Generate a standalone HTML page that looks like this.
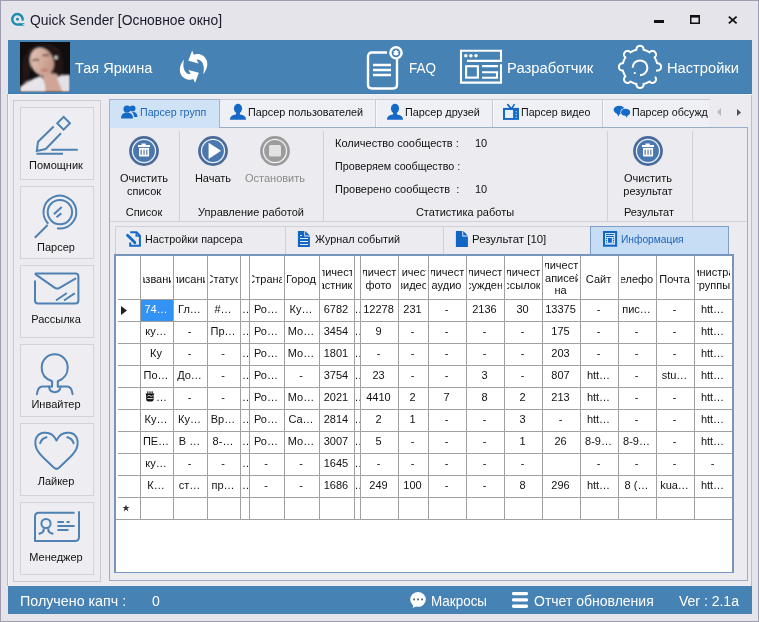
<!DOCTYPE html>
<html><head><meta charset="utf-8"><style>
html,body{margin:0;padding:0;}
body{width:759px;height:622px;overflow:hidden;position:relative;font-family:"Liberation Sans",sans-serif;}
</style></head><body><div style="position:absolute;left:0;top:0;width:759px;height:622px;will-change:transform;">
<div style="position:absolute;left:0px;top:0px;width:759px;height:622px;background:#e4e4ea;"></div>
<div style="position:absolute;left:0px;top:0px;width:759px;height:1px;background:#9e9cb0;"></div>
<div style="position:absolute;left:0px;top:0px;width:1px;height:622px;background:#9e9cb0;"></div>
<div style="position:absolute;left:758px;top:0px;width:1px;height:622px;background:#9e9cb0;"></div>
<div style="position:absolute;left:0px;top:621px;width:759px;height:1px;background:#9e9cb0;"></div>
<div style="position:absolute;left:8px;top:40px;width:744px;height:574px;background:#ebebf0;"></div>
<div style="position:absolute;left:751px;top:94px;width:1px;height:492px;background:#bfbcc8;"></div>
<div style="position:absolute;left:7px;top:94px;width:1px;height:492px;background:#bbbbc5;"></div>
<div style="position:absolute;left:8px;top:94px;width:1px;height:492px;background:#f3f3f7;"></div>
<svg style="position:absolute;left:8px;top:10px;" width="20" height="20" viewBox="0 0 20 20"><path d="M14.52 10.66 A5.25 5.25 0 1 0 11.67 14.06" fill="none" stroke="#1a8cae" stroke-width="2.4"/>
<circle cx="9.45" cy="9.3" r="1.45" fill="#1a8cae"/>
<path d="M11.2 13.3 L14.8 12.9 L14.8 15.7 L11.2 15.7 Z" fill="#1a8cae"/>
<rect x="15.2" y="13" width="1.1" height="0.9" fill="#3f6f84"/><rect x="15.2" y="14.9" width="1.1" height="0.9" fill="#3f6f84"/></svg>
<div style="position:absolute;left:30px;top:11.88px;font-size:14.5px;line-height:16.67px;height:16.67px;white-space:pre;color:#1b1b2a;transform:scaleX(0.956);transform-origin:0 0;">Quick Sender [Основное окно]</div>
<div style="position:absolute;left:654px;top:20px;width:10px;height:3px;background:#111;"></div>
<svg style="position:absolute;left:689px;top:14px;" width="12" height="11" viewBox="0 0 12 11"><rect x="1.75" y="1.75" width="8.5" height="7.5" fill="none" stroke="#111" stroke-width="1.5"/><rect x="1" y="1" width="10" height="2.6" fill="#111"/></svg>
<svg style="position:absolute;left:727px;top:15px;" width="12" height="10" viewBox="0 0 12 10"><path d="M1.8 1.6 L9.6 8.4 M9.6 1.6 L1.8 8.4" stroke="#111" stroke-width="1.8"/></svg>
<div style="position:absolute;left:8px;top:40px;width:744px;height:54px;background:#4682b4;"></div>
<div style="position:absolute;left:8px;top:93px;width:744px;height:1px;background:#3f7aae;"></div>
<div style="position:absolute;left:8px;top:94px;width:744px;height:1px;background:#eef5fb;"></div>
<svg style="position:absolute;left:20px;top:42px;" width="50" height="50" viewBox="0 0 50 50"><defs>
<filter id="bl" x="-20%" y="-20%" width="140%" height="140%"><feGaussianBlur stdDeviation="0.8"/></filter>
<linearGradient id="sk" x1="0" y1="0" x2="1" y2="1"><stop offset="0" stop-color="#e9cbbd"/><stop offset="1" stop-color="#b98a7a"/></linearGradient>
</defs>
<rect width="50" height="50" fill="#100d0e"/>
<g filter="url(#bl)">
<path d="M8 8 C14 1 30 0 38 6 C44 12 44 26 42 36 L34 36 C34 26 33 16 30 11 C24 7 15 9 12 18 C10 25 10 32 8 40 L2 40 L3 18 Z" fill="#211917"/>
<ellipse cx="22" cy="20" rx="11.5" ry="14.5" fill="url(#sk)" transform="rotate(-22 22 20)"/>
<path d="M24 30 C30 32 36 30 38 34 L42 50 L20 50 Z" fill="#cfa595"/>
<path d="M0 50 L0 45 C6 40 14 36 21 34 C24 38 26 44 25 50 Z" fill="#e8e5ea"/>
<path d="M50 50 L50 33 C46 32 40 33 37 36 C39 41 41 46 42 50 Z" fill="#e4e1e6"/>
<path d="M12 19 Q15.5 16.5 19 18 M22.5 14 Q26 12 29 13.5" stroke="#3a2420" stroke-width="1.4" fill="none"/>
<path d="M20 28 Q24 26.5 28 27.5 Q24.5 31 20 28 Z" fill="#bf6e6a"/>
<circle cx="36" cy="15.5" r="1.5" fill="#f4f4f4"/>
</g></svg>
<div style="position:absolute;left:75px;top:58.97px;font-size:15.5px;line-height:17.82px;height:17.82px;white-space:pre;color:#fff;transform:scaleX(0.937);transform-origin:0 0;">Тая Яркина</div>
<svg style="position:absolute;left:174px;top:48px;" width="40" height="40" viewBox="0 0 40 40"><g fill="#fff" transform="translate(19.6 18.8) scale(1.1) translate(-19.6 -18.8)">
<path id="ra" d="M28.3 25.5 C33 20 34 12 27.5 8.2 C24.5 6.6 21.5 7 19.8 7.8 L18.3 4 L14.8 13.4 L24.2 15.8 L22.3 12.2 C26.5 11.6 30.5 16.5 28.3 25.5 Z"/>
<use href="#ra" transform="rotate(180 19.6 18.8)"/>
</g></svg>
<svg style="position:absolute;left:365px;top:44px;" width="40" height="48" viewBox="0 0 40 48"><g fill="none" stroke="#fff" stroke-width="2.4">
<path d="M22 8.5 H7 Q3 8.5 3 12.5 V40.5 Q3 44.5 7 44.5 H28 Q32 44.5 32 40.5 V15"/>
<circle cx="31" cy="8.8" r="5.6"/>
<path d="M8 21 H26 M8 26 H26 M8 31 H26"/>
</g><path d="M31 6 L31 11.6 M28.6 7.4 L33.4 10.2 M33.4 7.4 L28.6 10.2" stroke="#fff" stroke-width="1.6"/></svg>
<div style="position:absolute;left:409px;top:58.97px;font-size:15.5px;line-height:17.82px;height:17.82px;white-space:pre;color:#fff;transform:scaleX(0.87);transform-origin:0 0;">FAQ</div>
<svg style="position:absolute;left:459px;top:49px;" width="45" height="37" viewBox="0 0 45 37"><g fill="none" stroke="#fff" stroke-width="2.1">
<path d="M42 15.2 V33.6 H2 V1.8 H42 V11.9 H7.9"/>
<rect x="7.1" y="17.2" width="11.8" height="11.4"/>
<path d="M23.1 17.1 H39 M23.1 23.3 H38 V28.7 H23.1"/>
</g><g fill="#fff"><circle cx="6.8" cy="6.8" r="1.8"/><circle cx="11.9" cy="6.8" r="1.8"/><circle cx="17" cy="6.8" r="1.8"/></g></svg>
<div style="position:absolute;left:507px;top:58.97px;font-size:15.5px;line-height:17.82px;height:17.82px;white-space:pre;color:#fff;transform:scaleX(0.955);transform-origin:0 0;">Разработчик</div>
<svg style="position:absolute;left:617px;top:44px;" width="46" height="46" viewBox="0 0 46 46"><path d="M38.49 33.44 L38.69 33.78 L38.82 34.08 L38.91 34.36 L38.97 34.61 L39.01 34.86 L39.03 35.09 L39.03 35.31 L39.02 35.53 L38.99 35.74 L38.96 35.94 L38.91 36.13 L38.85 36.32 L38.79 36.50 L38.71 36.68 L38.63 36.85 L38.54 37.02 L38.44 37.17 L38.34 37.33 L38.23 37.48 L38.11 37.62 L37.98 37.75 L37.85 37.88 L37.72 38.01 L37.58 38.13 L37.43 38.24 L37.27 38.34 L37.12 38.44 L36.95 38.53 L36.78 38.61 L36.60 38.69 L36.42 38.75 L36.23 38.81 L36.04 38.86 L35.84 38.89 L35.63 38.92 L35.41 38.93 L35.19 38.93 L34.96 38.91 L34.71 38.87 L34.46 38.81 L34.18 38.72 L33.88 38.59 L33.54 38.39 L33.11 38.04 L32.54 37.45 L32.41 37.53 L32.28 37.62 L32.16 37.70 L32.03 37.78 L31.90 37.85 L31.77 37.93 L31.63 38.01 L31.50 38.08 L31.37 38.16 L31.24 38.23 L31.10 38.30 L30.97 38.37 L30.83 38.44 L30.70 38.51 L30.56 38.57 L30.42 38.64 L30.28 38.70 L30.15 38.76 L30.01 38.83 L29.87 38.89 L29.73 38.95 L29.59 39.00 L29.45 39.06 L29.31 39.12 L29.16 39.17 L29.02 39.22 L28.88 39.28 L28.74 39.33 L28.59 39.38 L28.45 39.42 L28.30 39.47 L28.16 39.52 L28.01 39.56 L27.87 39.60 L27.72 39.65 L27.58 39.69 L27.43 39.73 L27.28 39.76 L27.14 39.80 L26.99 39.84 L26.84 39.87 L26.69 39.90 L26.54 39.94 L26.55 40.75 L26.49 41.31 L26.40 41.69 L26.28 41.99 L26.15 42.25 L26.01 42.48 L25.87 42.68 L25.72 42.85 L25.56 43.01 L25.40 43.16 L25.23 43.29 L25.06 43.40 L24.89 43.51 L24.72 43.60 L24.54 43.68 L24.37 43.75 L24.19 43.82 L24.01 43.87 L23.83 43.91 L23.64 43.95 L23.46 43.97 L23.28 43.99 L23.09 44.00 L22.91 44.00 L22.72 43.99 L22.54 43.97 L22.36 43.95 L22.17 43.91 L21.99 43.87 L21.81 43.82 L21.63 43.75 L21.46 43.68 L21.28 43.60 L21.11 43.51 L20.94 43.40 L20.77 43.29 L20.60 43.16 L20.44 43.01 L20.28 42.85 L20.13 42.68 L19.99 42.48 L19.85 42.25 L19.72 41.99 L19.60 41.69 L19.51 41.31 L19.45 40.75 L19.46 39.94 L19.31 39.90 L19.16 39.87 L19.01 39.84 L18.86 39.80 L18.72 39.76 L18.57 39.73 L18.42 39.69 L18.28 39.65 L18.13 39.60 L17.99 39.56 L17.84 39.52 L17.70 39.47 L17.55 39.42 L17.41 39.38 L17.26 39.33 L17.12 39.28 L16.98 39.22 L16.84 39.17 L16.69 39.12 L16.55 39.06 L16.41 39.00 L16.27 38.95 L16.13 38.89 L15.99 38.83 L15.85 38.76 L15.72 38.70 L15.58 38.64 L15.44 38.57 L15.30 38.51 L15.17 38.44 L15.03 38.37 L14.90 38.30 L14.76 38.23 L14.63 38.16 L14.50 38.08 L14.37 38.01 L14.23 37.93 L14.10 37.85 L13.97 37.78 L13.84 37.70 L13.72 37.62 L13.59 37.53 L13.46 37.45 L12.89 38.04 L12.46 38.39 L12.12 38.59 L11.82 38.72 L11.54 38.81 L11.29 38.87 L11.04 38.91 L10.81 38.93 L10.59 38.93 L10.37 38.92 L10.16 38.89 L9.96 38.86 L9.77 38.81 L9.58 38.75 L9.40 38.69 L9.22 38.61 L9.05 38.53 L8.88 38.44 L8.73 38.34 L8.57 38.24 L8.42 38.13 L8.28 38.01 L8.15 37.88 L8.02 37.75 L7.89 37.62 L7.77 37.48 L7.66 37.33 L7.56 37.17 L7.46 37.02 L7.37 36.85 L7.29 36.68 L7.21 36.50 L7.15 36.32 L7.09 36.13 L7.04 35.94 L7.01 35.74 L6.98 35.53 L6.97 35.31 L6.97 35.09 L6.99 34.86 L7.03 34.61 L7.09 34.36 L7.18 34.08 L7.31 33.78 L7.51 33.44 L7.86 33.01 L8.45 32.44 L8.37 32.31 L8.28 32.18 L8.20 32.06 L8.12 31.93 L8.05 31.80 L7.97 31.67 L7.89 31.53 L7.82 31.40 L7.74 31.27 L7.67 31.14 L7.60 31.00 L7.53 30.87 L7.46 30.73 L7.39 30.60 L7.33 30.46 L7.26 30.32 L7.20 30.18 L7.14 30.05 L7.07 29.91 L7.01 29.77 L6.95 29.63 L6.90 29.49 L6.84 29.35 L6.78 29.21 L6.73 29.06 L6.68 28.92 L6.62 28.78 L6.57 28.64 L6.52 28.49 L6.48 28.35 L6.43 28.20 L6.38 28.06 L6.34 27.91 L6.30 27.77 L6.25 27.62 L6.21 27.48 L6.17 27.33 L6.14 27.18 L6.10 27.04 L6.06 26.89 L6.03 26.74 L6.00 26.59 L5.96 26.44 L5.15 26.45 L4.59 26.39 L4.21 26.30 L3.91 26.18 L3.65 26.05 L3.42 25.91 L3.22 25.77 L3.05 25.62 L2.89 25.46 L2.74 25.30 L2.61 25.13 L2.50 24.96 L2.39 24.79 L2.30 24.62 L2.22 24.44 L2.15 24.27 L2.08 24.09 L2.03 23.91 L1.99 23.73 L1.95 23.54 L1.93 23.36 L1.91 23.18 L1.90 22.99 L1.90 22.81 L1.91 22.62 L1.93 22.44 L1.95 22.26 L1.99 22.07 L2.03 21.89 L2.08 21.71 L2.15 21.53 L2.22 21.36 L2.30 21.18 L2.39 21.01 L2.50 20.84 L2.61 20.67 L2.74 20.50 L2.89 20.34 L3.05 20.18 L3.22 20.03 L3.42 19.89 L3.65 19.75 L3.91 19.62 L4.21 19.50 L4.59 19.41 L5.15 19.35 L5.96 19.36 L6.00 19.21 L6.03 19.06 L6.06 18.91 L6.10 18.76 L6.14 18.62 L6.17 18.47 L6.21 18.32 L6.25 18.18 L6.30 18.03 L6.34 17.89 L6.38 17.74 L6.43 17.60 L6.48 17.45 L6.52 17.31 L6.57 17.16 L6.62 17.02 L6.68 16.88 L6.73 16.74 L6.78 16.59 L6.84 16.45 L6.90 16.31 L6.95 16.17 L7.01 16.03 L7.07 15.89 L7.14 15.75 L7.20 15.62 L7.26 15.48 L7.33 15.34 L7.39 15.20 L7.46 15.07 L7.53 14.93 L7.60 14.80 L7.67 14.66 L7.74 14.53 L7.82 14.40 L7.89 14.27 L7.97 14.13 L8.05 14.00 L8.12 13.87 L8.20 13.74 L8.28 13.62 L8.37 13.49 L8.45 13.36 L7.86 12.79 L7.51 12.36 L7.31 12.02 L7.18 11.72 L7.09 11.44 L7.03 11.19 L6.99 10.94 L6.97 10.71 L6.97 10.49 L6.98 10.27 L7.01 10.06 L7.04 9.86 L7.09 9.67 L7.15 9.48 L7.21 9.30 L7.29 9.12 L7.37 8.95 L7.46 8.78 L7.56 8.63 L7.66 8.47 L7.77 8.32 L7.89 8.18 L8.02 8.05 L8.15 7.92 L8.28 7.79 L8.42 7.67 L8.57 7.56 L8.73 7.46 L8.88 7.36 L9.05 7.27 L9.22 7.19 L9.40 7.11 L9.58 7.05 L9.77 6.99 L9.96 6.94 L10.16 6.91 L10.37 6.88 L10.59 6.87 L10.81 6.87 L11.04 6.89 L11.29 6.93 L11.54 6.99 L11.82 7.08 L12.12 7.21 L12.46 7.41 L12.89 7.76 L13.46 8.35 L13.59 8.27 L13.72 8.18 L13.84 8.10 L13.97 8.02 L14.10 7.95 L14.23 7.87 L14.37 7.79 L14.50 7.72 L14.63 7.64 L14.76 7.57 L14.90 7.50 L15.03 7.43 L15.17 7.36 L15.30 7.29 L15.44 7.23 L15.58 7.16 L15.72 7.10 L15.85 7.04 L15.99 6.97 L16.13 6.91 L16.27 6.85 L16.41 6.80 L16.55 6.74 L16.69 6.68 L16.84 6.63 L16.98 6.58 L17.12 6.52 L17.26 6.47 L17.41 6.42 L17.55 6.38 L17.70 6.33 L17.84 6.28 L17.99 6.24 L18.13 6.20 L18.28 6.15 L18.42 6.11 L18.57 6.07 L18.72 6.04 L18.86 6.00 L19.01 5.96 L19.16 5.93 L19.31 5.90 L19.46 5.86 L19.45 5.05 L19.51 4.49 L19.60 4.11 L19.72 3.81 L19.85 3.55 L19.99 3.32 L20.13 3.12 L20.28 2.95 L20.44 2.79 L20.60 2.64 L20.77 2.51 L20.94 2.40 L21.11 2.29 L21.28 2.20 L21.46 2.12 L21.63 2.05 L21.81 1.98 L21.99 1.93 L22.17 1.89 L22.36 1.85 L22.54 1.83 L22.72 1.81 L22.91 1.80 L23.09 1.80 L23.28 1.81 L23.46 1.83 L23.64 1.85 L23.83 1.89 L24.01 1.93 L24.19 1.98 L24.37 2.05 L24.54 2.12 L24.72 2.20 L24.89 2.29 L25.06 2.40 L25.23 2.51 L25.40 2.64 L25.56 2.79 L25.72 2.95 L25.87 3.12 L26.01 3.32 L26.15 3.55 L26.28 3.81 L26.40 4.11 L26.49 4.49 L26.55 5.05 L26.54 5.86 L26.69 5.90 L26.84 5.93 L26.99 5.96 L27.14 6.00 L27.28 6.04 L27.43 6.07 L27.58 6.11 L27.72 6.15 L27.87 6.20 L28.01 6.24 L28.16 6.28 L28.30 6.33 L28.45 6.38 L28.59 6.42 L28.74 6.47 L28.88 6.52 L29.02 6.58 L29.16 6.63 L29.31 6.68 L29.45 6.74 L29.59 6.80 L29.73 6.85 L29.87 6.91 L30.01 6.97 L30.15 7.04 L30.28 7.10 L30.42 7.16 L30.56 7.23 L30.70 7.29 L30.83 7.36 L30.97 7.43 L31.10 7.50 L31.24 7.57 L31.37 7.64 L31.50 7.72 L31.63 7.79 L31.77 7.87 L31.90 7.95 L32.03 8.02 L32.16 8.10 L32.28 8.18 L32.41 8.27 L32.54 8.35 L33.11 7.76 L33.54 7.41 L33.88 7.21 L34.18 7.08 L34.46 6.99 L34.71 6.93 L34.96 6.89 L35.19 6.87 L35.41 6.87 L35.63 6.88 L35.84 6.91 L36.04 6.94 L36.23 6.99 L36.42 7.05 L36.60 7.11 L36.78 7.19 L36.95 7.27 L37.12 7.36 L37.27 7.46 L37.43 7.56 L37.58 7.67 L37.72 7.79 L37.85 7.92 L37.98 8.05 L38.11 8.18 L38.23 8.32 L38.34 8.47 L38.44 8.63 L38.54 8.78 L38.63 8.95 L38.71 9.12 L38.79 9.30 L38.85 9.48 L38.91 9.67 L38.96 9.86 L38.99 10.06 L39.02 10.27 L39.03 10.49 L39.03 10.71 L39.01 10.94 L38.97 11.19 L38.91 11.44 L38.82 11.72 L38.69 12.02 L38.49 12.36 L38.14 12.79 L37.55 13.36 L37.63 13.49 L37.72 13.62 L37.80 13.74 L37.88 13.87 L37.95 14.00 L38.03 14.13 L38.11 14.27 L38.18 14.40 L38.26 14.53 L38.33 14.66 L38.40 14.80 L38.47 14.93 L38.54 15.07 L38.61 15.20 L38.67 15.34 L38.74 15.48 L38.80 15.62 L38.86 15.75 L38.93 15.89 L38.99 16.03 L39.05 16.17 L39.10 16.31 L39.16 16.45 L39.22 16.59 L39.27 16.74 L39.32 16.88 L39.38 17.02 L39.43 17.16 L39.48 17.31 L39.52 17.45 L39.57 17.60 L39.62 17.74 L39.66 17.89 L39.70 18.03 L39.75 18.18 L39.79 18.32 L39.83 18.47 L39.86 18.62 L39.90 18.76 L39.94 18.91 L39.97 19.06 L40.00 19.21 L40.04 19.36 L40.85 19.35 L41.41 19.41 L41.79 19.50 L42.09 19.62 L42.35 19.75 L42.58 19.89 L42.78 20.03 L42.95 20.18 L43.11 20.34 L43.26 20.50 L43.39 20.67 L43.50 20.84 L43.61 21.01 L43.70 21.18 L43.78 21.36 L43.85 21.53 L43.92 21.71 L43.97 21.89 L44.01 22.07 L44.05 22.26 L44.07 22.44 L44.09 22.62 L44.10 22.81 L44.10 22.90 L44.10 23.08 L44.08 23.27 L44.06 23.45 L44.03 23.63 L43.99 23.82 L43.94 24.00 L43.89 24.18 L43.82 24.36 L43.74 24.53 L43.65 24.71 L43.56 24.88 L43.45 25.05 L43.32 25.22 L43.19 25.38 L43.04 25.54 L42.87 25.69 L42.68 25.84 L42.47 25.98 L42.23 26.12 L41.95 26.24 L41.61 26.35 L41.16 26.43 L40.29 26.42 L40.02 26.52 L39.99 26.67 L39.95 26.81" fill="none" stroke="#fff" stroke-width="2" stroke-linejoin="round" stroke-linecap="round"/>
<path d="M 15.60 23.80 A7.4 7.4 0 1 1 23.00 31.20" fill="none" stroke="#fff" stroke-width="2"/>
<circle cx="17.77" cy="29.03" r="1.1" fill="#fff"/></svg>
<div style="position:absolute;left:667px;top:58.97px;font-size:15.5px;line-height:17.82px;height:17.82px;white-space:pre;color:#fff;transform:scaleX(0.947);transform-origin:0 0;">Настройки</div>
<div style="position:absolute;left:13px;top:100px;width:88px;height:482px;border:1px solid #c9c9d1;box-sizing:border-box;"></div>
<div style="position:absolute;left:20px;top:107px;width:74px;height:73px;border:1px solid #d2d2da;box-sizing:border-box;background:#eeeef2;"></div>
<div style="position:absolute;left:-94px;width:300px;text-align:center;top:159.04px;font-size:11px;line-height:12.65px;white-space:pre;color:#111;">Помощник</div>
<div style="position:absolute;left:20px;top:186px;width:74px;height:73px;border:1px solid #d2d2da;box-sizing:border-box;background:#eeeef2;"></div>
<div style="position:absolute;left:-94px;width:300px;text-align:center;top:241.04px;font-size:11px;line-height:12.65px;white-space:pre;color:#111;">Парсер</div>
<div style="position:absolute;left:20px;top:265px;width:74px;height:73px;border:1px solid #d2d2da;box-sizing:border-box;background:#eeeef2;"></div>
<div style="position:absolute;left:-94px;width:300px;text-align:center;top:313.05px;font-size:11px;line-height:12.65px;white-space:pre;color:#111;">Рассылка</div>
<div style="position:absolute;left:20px;top:344px;width:74px;height:73px;border:1px solid #d2d2da;box-sizing:border-box;background:#eeeef2;"></div>
<div style="position:absolute;left:-94px;width:300px;text-align:center;top:398.05px;font-size:11px;line-height:12.65px;white-space:pre;color:#111;">Инвайтер</div>
<div style="position:absolute;left:20px;top:423px;width:74px;height:73px;border:1px solid #d2d2da;box-sizing:border-box;background:#eeeef2;"></div>
<div style="position:absolute;left:-94px;width:300px;text-align:center;top:475.05px;font-size:11px;line-height:12.65px;white-space:pre;color:#111;">Лайкер</div>
<div style="position:absolute;left:20px;top:502px;width:74px;height:73px;border:1px solid #d2d2da;box-sizing:border-box;background:#eeeef2;"></div>
<div style="position:absolute;left:-94px;width:300px;text-align:center;top:551.04px;font-size:11px;line-height:12.65px;white-space:pre;color:#111;">Менеджер</div>
<svg style="position:absolute;left:28px;top:114px;" width="58" height="44" viewBox="0 0 58 44"><g fill="none" stroke="#4f81b3" stroke-width="2" stroke-linejoin="miter">
<path d="M25.7 12.5 L10 27.8 L8.8 37 L17.7 35 L33 19.3"/>
<rect x="31.1" y="4.8" width="9" height="9" transform="rotate(45 35.6 9.3)"/>
<path d="M23.3 35.8 H49.8 M8.4 39.8 H35"/>
</g></svg>
<svg style="position:absolute;left:28px;top:192px;" width="60" height="50" viewBox="0 0 60 50"><g fill="none" stroke="#4f81b3" stroke-width="2">
<path d="M 29.05 36.25 A16.4 16.4 0 1 0 20.30 31.70"/>
<circle cx="31.9" cy="20.1" r="12.2"/>
<path d="M19.6 33 L6.8 45.7"/>
<path d="M25.9 22.3 L33.7 14.9 M28.5 25.3 L33.3 21.4"/>
</g></svg>
<svg style="position:absolute;left:30px;top:270px;" width="54" height="40" viewBox="0 0 54 40"><g fill="none" stroke="#4f81b3" stroke-width="2" stroke-linejoin="round" stroke-linecap="round">
<path d="M5.6 3.6 H45.4 Q48.4 3.6 48.4 6.6 V30.4 Q48.4 33.4 45.4 33.4 H8 Q5 33.4 5 30.4 V11.3"/>
<path d="M5.6 4.4 L24.5 17.6 Q27 19.3 29.5 17.8 L45.4 8.6"/>
<path d="M26.6 30 L36.2 23.5 M34.7 30 L44.2 23.7"/>
</g></svg>
<svg style="position:absolute;left:30px;top:350px;" width="54" height="48" viewBox="0 0 54 48"><g fill="none" stroke="#4f81b3" stroke-width="2" stroke-linejoin="round" stroke-linecap="round">
<path d="M22.1 36.4 V31.2 C15 29 11.5 23.5 11.7 17.3 C11.9 9.8 17.5 4.3 24.7 4.3 C31.9 4.3 37.5 9.8 37.7 17.3 C37.9 23.5 34.4 29 27.8 31.2 V36.4"/>
<path d="M22.1 36.6 H12.5 C9.5 36.6 7.5 39.5 6.9 44.2 M27.8 36.6 H37 C40 36.6 42 39.5 42.6 44.2"/>
<path d="M18.9 36.8 C19.5 40 21.8 42.2 24.8 42.2 C27.8 42.2 30 40 30.6 36.8"/>
</g></svg>
<svg style="position:absolute;left:30px;top:428px;" width="54" height="46" viewBox="0 0 54 46"><g fill="none" stroke="#4f81b3" stroke-width="2" stroke-linejoin="round" stroke-linecap="round">
<path d="M26.5 12.5 C23.5 6 18 4.2 13.5 4.8 C7 5.6 4.2 11.5 5.8 18.5 C6.8 22.5 9.5 25.8 13 29.2 L24 39.8 Q26.5 42 29 39.8 L40 29.2 C43.5 25.8 46.2 22.5 47.2 18.5 C48.8 11.5 46 5.6 39.5 4.8 C35 4.2 29.5 6 26.5 12.5 Z"/>
<path d="M10.2 15.3 Q11.5 10.4 16.5 9.2 M37.3 9.2 Q42.3 10.4 43.6 15.3"/>
</g></svg>
<svg style="position:absolute;left:30px;top:507px;" width="54" height="40" viewBox="0 0 54 40"><g fill="none" stroke="#4f81b3" stroke-width="2" stroke-linejoin="round">
<path d="M44.6 5.8 H9 Q5 5.8 5 9.8 V34 H45 Q49 34 49 30 V4.3"/>
<circle cx="16" cy="16.5" r="4.6"/>
<path d="M8.7 27 L12 25.6 Q14 24.6 13.8 21.2 M23.3 27 L20 25.6 Q18 24.6 18.2 21.2"/>
<path d="M27.4 15 H33.9 M36.6 15 H39.6 M27.4 19 H44.6 M27.4 23 H38.5"/>
</g></svg>
<div style="position:absolute;left:220px;top:100px;width:489px;height:27px;background:#eff0f5;"></div>
<div style="position:absolute;left:109px;top:99px;width:601px;height:1px;background:#c7c9d4;"></div>
<div style="position:absolute;left:375px;top:100px;width:1px;height:27px;background:#c9cbd6;"></div>
<div style="position:absolute;left:376px;top:100px;width:1px;height:27px;background:#f6f7fa;"></div>
<div style="position:absolute;left:492px;top:100px;width:1px;height:27px;background:#c9cbd6;"></div>
<div style="position:absolute;left:493px;top:100px;width:1px;height:27px;background:#f6f7fa;"></div>
<div style="position:absolute;left:602px;top:100px;width:1px;height:27px;background:#c9cbd6;"></div>
<div style="position:absolute;left:603px;top:100px;width:1px;height:27px;background:#f6f7fa;"></div>
<div style="position:absolute;left:109px;top:127px;width:639px;height:454px;border:1px solid #98adc6;box-sizing:border-box;"></div>
<div style="position:absolute;left:109px;top:99px;width:111px;height:29px;background:#d0e3f6;border:1px solid #9fb4cc;border-bottom:none;box-sizing:border-box;"></div>
<svg style="position:absolute;left:121px;top:105px;" width="17" height="14" viewBox="0 0 17 14"><g fill="#1569c7"><circle cx="6" cy="4" r="3.6"/><path d="M0 13.5 C0 9 3 7.5 6 7.5 C9 7.5 12 9 12 13.5 Z"/>
<circle cx="11.5" cy="3.5" r="3"/><path d="M12 7 C15 7 16.5 9 16.5 12 L13 12 C13 10 12.5 8.5 11 7.5 Z"/></g></svg>
<div style="position:absolute;left:140px;top:106.05px;font-size:11px;line-height:12.65px;height:12.65px;white-space:pre;color:#1f66b8;transform:scaleX(0.97);transform-origin:0 0;">Парсер групп</div>
<svg style="position:absolute;left:228px;top:102px;" width="20" height="20" viewBox="0 0 20 20"><g fill="#1569c7"><ellipse cx="10" cy="6.6" rx="4.1" ry="4.8"/><path d="M2 17.7 C2 14 4.5 13 8 12.4 L8.3 10 H11.7 L12 12.4 C15.5 13 18 14 18 17.7 Z"/></g></svg>
<div style="position:absolute;left:248px;top:106.05px;font-size:11px;line-height:12.65px;height:12.65px;white-space:pre;color:#111;transform:scaleX(0.985);transform-origin:0 0;">Парсер пользователей</div>
<svg style="position:absolute;left:385px;top:102px;" width="20" height="20" viewBox="0 0 20 20"><g fill="#1569c7"><ellipse cx="10" cy="6.6" rx="4.1" ry="4.8"/><path d="M2 17.7 C2 14 4.5 13 8 12.4 L8.3 10 H11.7 L12 12.4 C15.5 13 18 14 18 17.7 Z"/></g></svg>
<div style="position:absolute;left:405px;top:106.05px;font-size:11px;line-height:12.65px;height:12.65px;white-space:pre;color:#111;transform:scaleX(0.985);transform-origin:0 0;">Парсер друзей</div>
<svg style="position:absolute;left:500px;top:102px;" width="22" height="20" viewBox="0 0 22 20"><path d="M7.8 2.6 L10.4 5.9 M14.2 2.6 L12 5.9" stroke="#1569c7" stroke-width="1.7" stroke-linecap="round"/>
<rect x="3" y="5.9" width="16" height="12" fill="#1569c7"/><rect x="5" y="8" width="8.1" height="8" fill="#e8f0fa"/>
<g fill="#9cc8f4"><circle cx="16.2" cy="9.8" r="0.8"/><circle cx="16.2" cy="12.5" r="0.8"/><circle cx="16.2" cy="15.2" r="0.8"/></g></svg>
<div style="position:absolute;left:521px;top:106.05px;font-size:11px;line-height:12.65px;height:12.65px;white-space:pre;color:#111;transform:scaleX(0.97);transform-origin:0 0;">Парсер видео</div>
<svg style="position:absolute;left:608px;top:102px;" width="26" height="20" viewBox="0 0 26 20"><g fill="#1569c7"><ellipse cx="11.2" cy="7.8" rx="5.6" ry="4"/><path d="M8.5 10.5 L10.2 14.5 L12.5 10.8Z"/></g>
<ellipse cx="17.6" cy="10.2" rx="5.2" ry="4.2" fill="#eef4fb"/>
<g fill="#1569c7"><ellipse cx="17.6" cy="10.2" rx="4.5" ry="3.5"/><path d="M17 12.5 L18.5 15.8 L20 12.5Z"/></g></svg>
<div style="position:absolute;left:632px;top:106.05px;font-size:11px;line-height:12.65px;height:12.65px;white-space:pre;color:#111;transform:scaleX(0.97);transform-origin:0 0;">Парсер обсужд</div>
<svg style="position:absolute;left:715px;top:107px;" width="8" height="10" viewBox="0 0 8 10"><path d="M6 1 L2 5 L6 9Z" fill="#b8b8c0"/></svg>
<svg style="position:absolute;left:735px;top:107px;" width="8" height="10" viewBox="0 0 8 10"><path d="M2 2 L6 5.5 L2 9Z" fill="#505050"/></svg>
<div style="position:absolute;left:179px;top:131px;width:1px;height:90px;background:#cfd0d8;"></div>
<div style="position:absolute;left:323px;top:131px;width:1px;height:90px;background:#cfd0d8;"></div>
<div style="position:absolute;left:607px;top:131px;width:1px;height:90px;background:#cfd0d8;"></div>
<div style="position:absolute;left:692px;top:131px;width:1px;height:90px;background:#cfd0d8;"></div>
<div style="position:absolute;left:110px;top:221px;width:637px;height:1px;background:#cfd0d8;"></div>
<svg style="position:absolute;left:129px;top:136px;" width="30" height="30" viewBox="0 0 30 30"><circle cx="15" cy="15" r="14.9" fill="#4a6a9a"/><circle cx="15" cy="15" r="12.2" fill="#e9f1fb"/><circle cx="15" cy="15" r="10.9" fill="#4a77ae"/><g fill="#fff"><rect x="9" y="9" width="12" height="2.1"/><rect x="12.6" y="7.5" width="4.1" height="1.6"/>
<path d="M10 12.1 H20.1 V19.6 Q20.1 20.6 19.1 20.6 H11 Q10 20.6 10 19.6 Z"/></g><g fill="#4a6a9a"><rect x="11.6" y="13.7" width="1.1" height="5.1"/><rect x="14.5" y="13.7" width="1.1" height="5.1"/><rect x="17.3" y="13.7" width="1.1" height="5.1"/></g></svg>
<div style="position:absolute;left:-6px;width:300px;text-align:center;top:172.04px;font-size:11px;line-height:12.65px;white-space:pre;color:#111;">Очистить</div>
<div style="position:absolute;left:-6px;width:300px;text-align:center;top:185.04px;font-size:11px;line-height:12.65px;white-space:pre;color:#111;">список</div>
<div style="position:absolute;left:-6px;width:300px;text-align:center;top:206.04px;font-size:11px;line-height:12.65px;white-space:pre;color:#111;">Список</div>
<svg style="position:absolute;left:197.7px;top:136px;" width="30" height="30" viewBox="0 0 30 30"><circle cx="15" cy="15" r="14.9" fill="#4a6a9a"/><circle cx="15" cy="15" r="12.2" fill="#e9f1fb"/><circle cx="15" cy="15" r="10.9" fill="#4a77ae"/><path d="M10.9 7.2 L22.6 14.8 L10.9 22.4 Z" fill="#fff" stroke="#fff" stroke-width="0.6" stroke-linejoin="round"/></svg>
<svg style="position:absolute;left:260px;top:136px;" width="30" height="30" viewBox="0 0 30 30"><circle cx="15" cy="15" r="14.9" fill="#9a9a9a"/><circle cx="15" cy="15" r="12.2" fill="#f2f2f4"/><circle cx="15" cy="15" r="10.9" fill="#9c9c9c"/><rect x="9" y="9" width="12" height="11.5" rx="1.5" fill="#e2e2e2"/></svg>
<div style="position:absolute;left:63px;width:300px;text-align:center;top:172.04px;font-size:11px;line-height:12.65px;white-space:pre;color:#111;">Начать</div>
<div style="position:absolute;left:125px;width:300px;text-align:center;top:172.04px;font-size:11px;line-height:12.65px;white-space:pre;color:#8a8a8a;">Остановить</div>
<div style="position:absolute;left:101px;width:300px;text-align:center;top:206.04px;font-size:11px;line-height:12.65px;white-space:pre;color:#111;">Управление работой</div>
<div style="position:absolute;left:335px;top:137.04px;font-size:11px;line-height:12.65px;height:12.65px;white-space:pre;color:#111;">Количество сообществ :</div>
<div style="position:absolute;left:475px;top:137.04px;font-size:11px;line-height:12.65px;height:12.65px;white-space:pre;color:#111;">10</div>
<div style="position:absolute;left:335px;top:160.04px;font-size:11px;line-height:12.65px;height:12.65px;white-space:pre;color:#111;transform:scaleX(0.975);transform-origin:0 0;">Проверяем сообщество :</div>
<div style="position:absolute;left:335px;top:183.04px;font-size:11px;line-height:12.65px;height:12.65px;white-space:pre;color:#111;">Проверено сообществ  :</div>
<div style="position:absolute;left:475px;top:183.04px;font-size:11px;line-height:12.65px;height:12.65px;white-space:pre;color:#111;">10</div>
<div style="position:absolute;left:315px;width:300px;text-align:center;top:206.04px;font-size:11px;line-height:12.65px;white-space:pre;color:#111;">Статистика работы</div>
<svg style="position:absolute;left:633px;top:136px;" width="30" height="30" viewBox="0 0 30 30"><circle cx="15" cy="15" r="14.9" fill="#4a6a9a"/><circle cx="15" cy="15" r="12.2" fill="#e9f1fb"/><circle cx="15" cy="15" r="10.9" fill="#4a77ae"/><g fill="#fff"><rect x="9" y="9" width="12" height="2.1"/><rect x="12.6" y="7.5" width="4.1" height="1.6"/>
<path d="M10 12.1 H20.1 V19.6 Q20.1 20.6 19.1 20.6 H11 Q10 20.6 10 19.6 Z"/></g><g fill="#4a6a9a"><rect x="11.6" y="13.7" width="1.1" height="5.1"/><rect x="14.5" y="13.7" width="1.1" height="5.1"/><rect x="17.3" y="13.7" width="1.1" height="5.1"/></g></svg>
<div style="position:absolute;left:498px;width:300px;text-align:center;top:172.04px;font-size:11px;line-height:12.65px;white-space:pre;color:#111;">Очистить</div>
<div style="position:absolute;left:498px;width:300px;text-align:center;top:185.04px;font-size:11px;line-height:12.65px;white-space:pre;color:#111;">результат</div>
<div style="position:absolute;left:499px;width:300px;text-align:center;top:206.04px;font-size:11px;line-height:12.65px;white-space:pre;color:#111;">Результат</div>
<div style="position:absolute;left:115px;top:226px;width:614px;height:1px;background:#cfd0d8;"></div>
<div style="position:absolute;left:115px;top:226px;width:1px;height:29px;background:#cfd0d8;"></div>
<div style="position:absolute;left:285px;top:226px;width:1px;height:29px;background:#cfd0d8;"></div>
<div style="position:absolute;left:443px;top:226px;width:1px;height:29px;background:#cfd0d8;"></div>
<div style="position:absolute;left:590px;top:226px;width:139px;height:29px;background:#c6ddf5;border:1px solid #7f9ec4;border-bottom:none;box-sizing:border-box;"></div>
<svg style="position:absolute;left:125px;top:230px;" width="17" height="18" viewBox="0 0 17 18"><path d="M5.2 12.5 V15.8 H14.9 V5.7 L11.6 2.3 H5.2" fill="none" stroke="#1569c7" stroke-width="2"/>
<path d="M11.2 2.3 V6 H14.9" fill="none" stroke="#1569c7" stroke-width="1.4"/>
<path d="M2.5 5.2 L9.8 12.5" stroke="#1569c7" stroke-width="2.8" stroke-linecap="round"/><path d="M9 13.8 L11.2 14.2 L10.6 12 Z" fill="#1569c7"/></svg>
<div style="position:absolute;left:145px;top:233.04px;font-size:11px;line-height:12.65px;height:12.65px;white-space:pre;color:#111;transform:scaleX(0.985);transform-origin:0 0;">Настройки парсера</div>
<svg style="position:absolute;left:296px;top:230px;" width="16" height="18" viewBox="0 0 16 18"><path d="M1.9 1 H8.3 V6.5 H13.9 V16.9 H1.9 Z M9.2 1 L13.75 5.6 H9.2 Z" fill="#1166c4"/><g fill="#dff0ff"><rect x="4" y="5" width="2" height="1"/><rect x="4" y="8" width="8" height="1"/><rect x="4" y="11" width="8" height="1"/><rect x="4" y="14" width="8" height="1"/></g></svg>
<div style="position:absolute;left:315px;top:233.04px;font-size:11px;line-height:12.65px;height:12.65px;white-space:pre;color:#111;transform:scaleX(0.985);transform-origin:0 0;">Журнал событий</div>
<svg style="position:absolute;left:454px;top:230px;" width="16" height="18" viewBox="0 0 16 18"><path d="M1.9 1 H8.3 V6.5 H13.9 V16.9 H1.9 Z M9.2 1 L13.75 5.6 H9.2 Z" fill="#1166c4"/></svg>
<div style="position:absolute;left:472px;top:233.04px;font-size:11px;line-height:12.65px;height:12.65px;white-space:pre;color:#111;transform:scaleX(1.04);transform-origin:0 0;">Результат [10]</div>
<svg style="position:absolute;left:602px;top:230px;" width="18" height="18" viewBox="0 0 18 18"><rect x="2" y="2" width="12.1" height="13.7" fill="none" stroke="#1166c4" stroke-width="2"/><rect x="4.1" y="4" width="7.6" height="1" fill="#1166c4"/><rect x="4.1" y="6" width="7.6" height="1" fill="#1166c4"/><rect x="6" y="8" width="3.8" height="4.7" fill="#1166c4"/><g fill="#1166c4"><circle cx="4.5" cy="8.4" r="0.55"/><circle cx="4.5" cy="10.4" r="0.55"/><circle cx="4.5" cy="12.3" r="0.55"/><circle cx="11.5" cy="8.4" r="0.55"/><circle cx="11.5" cy="10.4" r="0.55"/><circle cx="11.5" cy="12.3" r="0.55"/></g></svg>
<div style="position:absolute;left:621px;top:233.04px;font-size:11px;line-height:12.65px;height:12.65px;white-space:pre;color:#1f66b8;transform:scaleX(0.93);transform-origin:0 0;">Информация</div>
<div style="position:absolute;left:114px;top:254px;width:620px;height:319px;border:2px solid #7896bb;border-bottom-width:1px;box-sizing:border-box;background:#fff;"></div>
<div style="position:absolute;left:140px;top:256px;width:1px;height:264px;background:#a0a0a0;"></div>
<div style="position:absolute;left:173px;top:256px;width:1px;height:264px;background:#a0a0a0;"></div>
<div style="position:absolute;left:207px;top:256px;width:1px;height:264px;background:#a0a0a0;"></div>
<div style="position:absolute;left:240px;top:256px;width:1px;height:264px;background:#a0a0a0;"></div>
<div style="position:absolute;left:249px;top:256px;width:1px;height:264px;background:#a0a0a0;"></div>
<div style="position:absolute;left:284px;top:256px;width:1px;height:264px;background:#a0a0a0;"></div>
<div style="position:absolute;left:319px;top:256px;width:1px;height:264px;background:#a0a0a0;"></div>
<div style="position:absolute;left:354px;top:256px;width:1px;height:264px;background:#a0a0a0;"></div>
<div style="position:absolute;left:360px;top:256px;width:1px;height:264px;background:#a0a0a0;"></div>
<div style="position:absolute;left:398px;top:256px;width:1px;height:264px;background:#a0a0a0;"></div>
<div style="position:absolute;left:428px;top:256px;width:1px;height:264px;background:#a0a0a0;"></div>
<div style="position:absolute;left:466px;top:256px;width:1px;height:264px;background:#a0a0a0;"></div>
<div style="position:absolute;left:504px;top:256px;width:1px;height:264px;background:#a0a0a0;"></div>
<div style="position:absolute;left:542px;top:256px;width:1px;height:264px;background:#a0a0a0;"></div>
<div style="position:absolute;left:580px;top:256px;width:1px;height:264px;background:#a0a0a0;"></div>
<div style="position:absolute;left:618px;top:256px;width:1px;height:264px;background:#a0a0a0;"></div>
<div style="position:absolute;left:656px;top:256px;width:1px;height:264px;background:#a0a0a0;"></div>
<div style="position:absolute;left:694px;top:256px;width:1px;height:264px;background:#a0a0a0;"></div>
<div style="position:absolute;left:118px;top:299px;width:22px;height:1px;background:#a0a0a0;"></div>
<div style="position:absolute;left:140px;top:299px;width:592px;height:1px;background:#a0a0a0;"></div>
<div style="position:absolute;left:118px;top:321px;width:22px;height:1px;background:#a0a0a0;"></div>
<div style="position:absolute;left:140px;top:321px;width:592px;height:1px;background:#a0a0a0;"></div>
<div style="position:absolute;left:118px;top:343px;width:22px;height:1px;background:#a0a0a0;"></div>
<div style="position:absolute;left:140px;top:343px;width:592px;height:1px;background:#a0a0a0;"></div>
<div style="position:absolute;left:118px;top:365px;width:22px;height:1px;background:#a0a0a0;"></div>
<div style="position:absolute;left:140px;top:365px;width:592px;height:1px;background:#a0a0a0;"></div>
<div style="position:absolute;left:118px;top:387px;width:22px;height:1px;background:#a0a0a0;"></div>
<div style="position:absolute;left:140px;top:387px;width:592px;height:1px;background:#a0a0a0;"></div>
<div style="position:absolute;left:118px;top:409px;width:22px;height:1px;background:#a0a0a0;"></div>
<div style="position:absolute;left:140px;top:409px;width:592px;height:1px;background:#a0a0a0;"></div>
<div style="position:absolute;left:118px;top:431px;width:22px;height:1px;background:#a0a0a0;"></div>
<div style="position:absolute;left:140px;top:431px;width:592px;height:1px;background:#a0a0a0;"></div>
<div style="position:absolute;left:118px;top:453px;width:22px;height:1px;background:#a0a0a0;"></div>
<div style="position:absolute;left:140px;top:453px;width:592px;height:1px;background:#a0a0a0;"></div>
<div style="position:absolute;left:118px;top:475px;width:22px;height:1px;background:#a0a0a0;"></div>
<div style="position:absolute;left:140px;top:475px;width:592px;height:1px;background:#a0a0a0;"></div>
<div style="position:absolute;left:118px;top:497px;width:22px;height:1px;background:#a0a0a0;"></div>
<div style="position:absolute;left:140px;top:497px;width:592px;height:1px;background:#a0a0a0;"></div>
<div style="position:absolute;left:116px;top:519px;width:616px;height:1px;background:#a0a0a0;"></div>
<div style="position:absolute;left:143px;top:273px;width:28px;height:13px;overflow:hidden;"><div style="position:absolute;left:-101px;width:228px;text-align:center;top:0;font-size:11px;line-height:13px;white-space:pre;color:#111;">Название</div></div>
<div style="position:absolute;left:176px;top:273px;width:29px;height:13px;overflow:hidden;"><div style="position:absolute;left:-101px;width:229px;text-align:center;top:0;font-size:11px;line-height:13px;white-space:pre;color:#111;">Описание</div></div>
<div style="position:absolute;left:210px;top:273px;width:28px;height:13px;overflow:hidden;"><div style="position:absolute;left:-101px;width:228px;text-align:center;top:0;font-size:11px;line-height:13px;white-space:pre;color:#111;">Статус</div></div>
<div style="position:absolute;left:252px;top:273px;width:30px;height:13px;overflow:hidden;"><div style="position:absolute;left:-101px;width:230px;text-align:center;top:0;font-size:11px;line-height:13px;white-space:pre;color:#111;">Страна</div></div>
<div style="position:absolute;left:287px;top:273px;width:30px;height:13px;overflow:hidden;"><div style="position:absolute;left:-101px;width:230px;text-align:center;top:0;font-size:11px;line-height:13px;white-space:pre;color:#111;">Город</div></div>
<div style="position:absolute;left:322px;top:266px;width:30px;height:13px;overflow:hidden;"><div style="position:absolute;left:-101px;width:230px;text-align:center;top:0;font-size:11px;line-height:13px;white-space:pre;color:#111;">Количество</div></div>
<div style="position:absolute;left:322px;top:279px;width:30px;height:13px;overflow:hidden;"><div style="position:absolute;left:-101px;width:230px;text-align:center;top:0;font-size:11px;line-height:13px;white-space:pre;color:#111;">участников</div></div>
<div style="position:absolute;left:363px;top:266px;width:33px;height:13px;overflow:hidden;"><div style="position:absolute;left:-101px;width:233px;text-align:center;top:0;font-size:11px;line-height:13px;white-space:pre;color:#111;">Количество</div></div>
<div style="position:absolute;left:363px;top:279px;width:33px;height:13px;overflow:hidden;"><div style="position:absolute;left:-101px;width:233px;text-align:center;top:0;font-size:11px;line-height:13px;white-space:pre;color:#111;">фото</div></div>
<div style="position:absolute;left:401px;top:266px;width:25px;height:13px;overflow:hidden;"><div style="position:absolute;left:-101px;width:225px;text-align:center;top:0;font-size:11px;line-height:13px;white-space:pre;color:#111;">Количество</div></div>
<div style="position:absolute;left:401px;top:279px;width:25px;height:13px;overflow:hidden;"><div style="position:absolute;left:-101px;width:225px;text-align:center;top:0;font-size:11px;line-height:13px;white-space:pre;color:#111;">видео</div></div>
<div style="position:absolute;left:431px;top:266px;width:33px;height:13px;overflow:hidden;"><div style="position:absolute;left:-101px;width:233px;text-align:center;top:0;font-size:11px;line-height:13px;white-space:pre;color:#111;">Количество</div></div>
<div style="position:absolute;left:431px;top:279px;width:33px;height:13px;overflow:hidden;"><div style="position:absolute;left:-101px;width:233px;text-align:center;top:0;font-size:11px;line-height:13px;white-space:pre;color:#111;">аудио</div></div>
<div style="position:absolute;left:469px;top:266px;width:33px;height:13px;overflow:hidden;"><div style="position:absolute;left:-101px;width:233px;text-align:center;top:0;font-size:11px;line-height:13px;white-space:pre;color:#111;">Количество</div></div>
<div style="position:absolute;left:469px;top:279px;width:33px;height:13px;overflow:hidden;"><div style="position:absolute;left:-101px;width:233px;text-align:center;top:0;font-size:11px;line-height:13px;white-space:pre;color:#111;">обсуждений</div></div>
<div style="position:absolute;left:507px;top:266px;width:33px;height:13px;overflow:hidden;"><div style="position:absolute;left:-101px;width:233px;text-align:center;top:0;font-size:11px;line-height:13px;white-space:pre;color:#111;">Количество</div></div>
<div style="position:absolute;left:507px;top:279px;width:33px;height:13px;overflow:hidden;"><div style="position:absolute;left:-101px;width:233px;text-align:center;top:0;font-size:11px;line-height:13px;white-space:pre;color:#111;">ссылок</div></div>
<div style="position:absolute;left:545px;top:259px;width:33px;height:13px;overflow:hidden;"><div style="position:absolute;left:-101px;width:233px;text-align:center;top:0;font-size:11px;line-height:13px;white-space:pre;color:#111;">Количество</div></div>
<div style="position:absolute;left:545px;top:272px;width:33px;height:13px;overflow:hidden;"><div style="position:absolute;left:-101px;width:233px;text-align:center;top:0;font-size:11px;line-height:13px;white-space:pre;color:#111;">записей</div></div>
<div style="position:absolute;left:545px;top:284px;width:33px;height:13px;overflow:hidden;"><div style="position:absolute;left:-101px;width:233px;text-align:center;top:0;font-size:11px;line-height:13px;white-space:pre;color:#111;">на</div></div>
<div style="position:absolute;left:583px;top:273px;width:33px;height:13px;overflow:hidden;"><div style="position:absolute;left:-101px;width:233px;text-align:center;top:0;font-size:11px;line-height:13px;white-space:pre;color:#111;">Сайт</div></div>
<div style="position:absolute;left:621px;top:273px;width:33px;height:13px;overflow:hidden;"><div style="position:absolute;left:-101px;width:233px;text-align:center;top:0;font-size:11px;line-height:13px;white-space:pre;color:#111;">Телефон</div></div>
<div style="position:absolute;left:659px;top:273px;width:33px;height:13px;overflow:hidden;"><div style="position:absolute;left:-101px;width:233px;text-align:center;top:0;font-size:11px;line-height:13px;white-space:pre;color:#111;">Почта</div></div>
<div style="position:absolute;left:697px;top:266px;width:33px;height:13px;overflow:hidden;"><div style="position:absolute;left:-101px;width:233px;text-align:center;top:0;font-size:11px;line-height:13px;white-space:pre;color:#111;">Администрация</div></div>
<div style="position:absolute;left:697px;top:279px;width:33px;height:13px;overflow:hidden;"><div style="position:absolute;left:-101px;width:233px;text-align:center;top:0;font-size:11px;line-height:13px;white-space:pre;color:#111;">группы</div></div>
<div style="position:absolute;left:141px;top:300px;width:32px;height:21px;background:#3393f4;"></div>
<div style="position:absolute;left:141px;top:303px;width:32px;height:13px;overflow:hidden;"><div style="position:absolute;left:-101px;width:232px;text-align:center;top:0;font-size:11px;line-height:13px;white-space:pre;color:#fff;">74…</div></div>
<div style="position:absolute;left:174px;top:303px;width:33px;height:13px;overflow:hidden;"><div style="position:absolute;left:-101px;width:233px;text-align:center;top:0;font-size:11px;line-height:13px;white-space:pre;color:#111;">Гл…</div></div>
<div style="position:absolute;left:208px;top:303px;width:32px;height:13px;overflow:hidden;"><div style="position:absolute;left:-101px;width:232px;text-align:center;top:0;font-size:11px;line-height:13px;white-space:pre;color:#111;">#…</div></div>
<div style="position:absolute;left:241px;top:303px;width:8px;height:13px;overflow:hidden;"><div style="position:absolute;left:-101px;width:208px;text-align:center;top:0;font-size:11px;line-height:13px;white-space:pre;color:#111;">…</div></div>
<div style="position:absolute;left:250px;top:303px;width:34px;height:13px;overflow:hidden;"><div style="position:absolute;left:-101px;width:234px;text-align:center;top:0;font-size:11px;line-height:13px;white-space:pre;color:#111;">Ро…</div></div>
<div style="position:absolute;left:285px;top:303px;width:34px;height:13px;overflow:hidden;"><div style="position:absolute;left:-101px;width:234px;text-align:center;top:0;font-size:11px;line-height:13px;white-space:pre;color:#111;">Ку…</div></div>
<div style="position:absolute;left:320px;top:303px;width:34px;height:13px;overflow:hidden;"><div style="position:absolute;left:-101px;width:234px;text-align:center;top:0;font-size:11px;line-height:13px;white-space:pre;color:#111;">6782</div></div>
<div style="position:absolute;left:355px;top:303px;width:5px;height:13px;overflow:hidden;"><div style="position:absolute;left:-101px;width:205px;text-align:center;top:0;font-size:11px;line-height:13px;white-space:pre;color:#111;">…</div></div>
<div style="position:absolute;left:361px;top:303px;width:37px;height:13px;overflow:hidden;"><div style="position:absolute;left:-101px;width:237px;text-align:center;top:0;font-size:11px;line-height:13px;white-space:pre;color:#111;">12278</div></div>
<div style="position:absolute;left:399px;top:303px;width:29px;height:13px;overflow:hidden;"><div style="position:absolute;left:-101px;width:229px;text-align:center;top:0;font-size:11px;line-height:13px;white-space:pre;color:#111;">231</div></div>
<div style="position:absolute;left:429px;top:303px;width:37px;height:13px;overflow:hidden;"><div style="position:absolute;left:-101px;width:237px;text-align:center;top:0;font-size:11px;line-height:13px;white-space:pre;color:#111;">-</div></div>
<div style="position:absolute;left:467px;top:303px;width:37px;height:13px;overflow:hidden;"><div style="position:absolute;left:-101px;width:237px;text-align:center;top:0;font-size:11px;line-height:13px;white-space:pre;color:#111;">2136</div></div>
<div style="position:absolute;left:505px;top:303px;width:37px;height:13px;overflow:hidden;"><div style="position:absolute;left:-101px;width:237px;text-align:center;top:0;font-size:11px;line-height:13px;white-space:pre;color:#111;">30</div></div>
<div style="position:absolute;left:543px;top:303px;width:37px;height:13px;overflow:hidden;"><div style="position:absolute;left:-101px;width:237px;text-align:center;top:0;font-size:11px;line-height:13px;white-space:pre;color:#111;">13375</div></div>
<div style="position:absolute;left:581px;top:303px;width:37px;height:13px;overflow:hidden;"><div style="position:absolute;left:-101px;width:237px;text-align:center;top:0;font-size:11px;line-height:13px;white-space:pre;color:#111;">-</div></div>
<div style="position:absolute;left:619px;top:303px;width:37px;height:13px;overflow:hidden;"><div style="position:absolute;left:-101px;width:237px;text-align:center;top:0;font-size:11px;line-height:13px;white-space:pre;color:#111;">пис…</div></div>
<div style="position:absolute;left:657px;top:303px;width:37px;height:13px;overflow:hidden;"><div style="position:absolute;left:-101px;width:237px;text-align:center;top:0;font-size:11px;line-height:13px;white-space:pre;color:#111;">-</div></div>
<div style="position:absolute;left:695px;top:303px;width:37px;height:13px;overflow:hidden;"><div style="position:absolute;left:-101px;width:237px;text-align:center;top:0;font-size:11px;line-height:13px;white-space:pre;color:#111;">htt…</div></div>
<div style="position:absolute;left:141px;top:325px;width:32px;height:13px;overflow:hidden;"><div style="position:absolute;left:-101px;width:232px;text-align:center;top:0;font-size:11px;line-height:13px;white-space:pre;color:#111;">ку…</div></div>
<div style="position:absolute;left:174px;top:325px;width:33px;height:13px;overflow:hidden;"><div style="position:absolute;left:-101px;width:233px;text-align:center;top:0;font-size:11px;line-height:13px;white-space:pre;color:#111;">-</div></div>
<div style="position:absolute;left:208px;top:325px;width:32px;height:13px;overflow:hidden;"><div style="position:absolute;left:-101px;width:232px;text-align:center;top:0;font-size:11px;line-height:13px;white-space:pre;color:#111;">Пр…</div></div>
<div style="position:absolute;left:241px;top:325px;width:8px;height:13px;overflow:hidden;"><div style="position:absolute;left:-101px;width:208px;text-align:center;top:0;font-size:11px;line-height:13px;white-space:pre;color:#111;">…</div></div>
<div style="position:absolute;left:250px;top:325px;width:34px;height:13px;overflow:hidden;"><div style="position:absolute;left:-101px;width:234px;text-align:center;top:0;font-size:11px;line-height:13px;white-space:pre;color:#111;">Ро…</div></div>
<div style="position:absolute;left:285px;top:325px;width:34px;height:13px;overflow:hidden;"><div style="position:absolute;left:-101px;width:234px;text-align:center;top:0;font-size:11px;line-height:13px;white-space:pre;color:#111;">Мо…</div></div>
<div style="position:absolute;left:320px;top:325px;width:34px;height:13px;overflow:hidden;"><div style="position:absolute;left:-101px;width:234px;text-align:center;top:0;font-size:11px;line-height:13px;white-space:pre;color:#111;">3454</div></div>
<div style="position:absolute;left:355px;top:325px;width:5px;height:13px;overflow:hidden;"><div style="position:absolute;left:-101px;width:205px;text-align:center;top:0;font-size:11px;line-height:13px;white-space:pre;color:#111;">…</div></div>
<div style="position:absolute;left:361px;top:325px;width:37px;height:13px;overflow:hidden;"><div style="position:absolute;left:-101px;width:237px;text-align:center;top:0;font-size:11px;line-height:13px;white-space:pre;color:#111;">9</div></div>
<div style="position:absolute;left:399px;top:325px;width:29px;height:13px;overflow:hidden;"><div style="position:absolute;left:-101px;width:229px;text-align:center;top:0;font-size:11px;line-height:13px;white-space:pre;color:#111;">-</div></div>
<div style="position:absolute;left:429px;top:325px;width:37px;height:13px;overflow:hidden;"><div style="position:absolute;left:-101px;width:237px;text-align:center;top:0;font-size:11px;line-height:13px;white-space:pre;color:#111;">-</div></div>
<div style="position:absolute;left:467px;top:325px;width:37px;height:13px;overflow:hidden;"><div style="position:absolute;left:-101px;width:237px;text-align:center;top:0;font-size:11px;line-height:13px;white-space:pre;color:#111;">-</div></div>
<div style="position:absolute;left:505px;top:325px;width:37px;height:13px;overflow:hidden;"><div style="position:absolute;left:-101px;width:237px;text-align:center;top:0;font-size:11px;line-height:13px;white-space:pre;color:#111;">-</div></div>
<div style="position:absolute;left:543px;top:325px;width:37px;height:13px;overflow:hidden;"><div style="position:absolute;left:-101px;width:237px;text-align:center;top:0;font-size:11px;line-height:13px;white-space:pre;color:#111;">175</div></div>
<div style="position:absolute;left:581px;top:325px;width:37px;height:13px;overflow:hidden;"><div style="position:absolute;left:-101px;width:237px;text-align:center;top:0;font-size:11px;line-height:13px;white-space:pre;color:#111;">-</div></div>
<div style="position:absolute;left:619px;top:325px;width:37px;height:13px;overflow:hidden;"><div style="position:absolute;left:-101px;width:237px;text-align:center;top:0;font-size:11px;line-height:13px;white-space:pre;color:#111;">-</div></div>
<div style="position:absolute;left:657px;top:325px;width:37px;height:13px;overflow:hidden;"><div style="position:absolute;left:-101px;width:237px;text-align:center;top:0;font-size:11px;line-height:13px;white-space:pre;color:#111;">-</div></div>
<div style="position:absolute;left:695px;top:325px;width:37px;height:13px;overflow:hidden;"><div style="position:absolute;left:-101px;width:237px;text-align:center;top:0;font-size:11px;line-height:13px;white-space:pre;color:#111;">htt…</div></div>
<div style="position:absolute;left:141px;top:347px;width:32px;height:13px;overflow:hidden;"><div style="position:absolute;left:-101px;width:232px;text-align:center;top:0;font-size:11px;line-height:13px;white-space:pre;color:#111;">Ку</div></div>
<div style="position:absolute;left:174px;top:347px;width:33px;height:13px;overflow:hidden;"><div style="position:absolute;left:-101px;width:233px;text-align:center;top:0;font-size:11px;line-height:13px;white-space:pre;color:#111;">-</div></div>
<div style="position:absolute;left:208px;top:347px;width:32px;height:13px;overflow:hidden;"><div style="position:absolute;left:-101px;width:232px;text-align:center;top:0;font-size:11px;line-height:13px;white-space:pre;color:#111;">-</div></div>
<div style="position:absolute;left:241px;top:347px;width:8px;height:13px;overflow:hidden;"><div style="position:absolute;left:-101px;width:208px;text-align:center;top:0;font-size:11px;line-height:13px;white-space:pre;color:#111;">…</div></div>
<div style="position:absolute;left:250px;top:347px;width:34px;height:13px;overflow:hidden;"><div style="position:absolute;left:-101px;width:234px;text-align:center;top:0;font-size:11px;line-height:13px;white-space:pre;color:#111;">Ро…</div></div>
<div style="position:absolute;left:285px;top:347px;width:34px;height:13px;overflow:hidden;"><div style="position:absolute;left:-101px;width:234px;text-align:center;top:0;font-size:11px;line-height:13px;white-space:pre;color:#111;">Мо…</div></div>
<div style="position:absolute;left:320px;top:347px;width:34px;height:13px;overflow:hidden;"><div style="position:absolute;left:-101px;width:234px;text-align:center;top:0;font-size:11px;line-height:13px;white-space:pre;color:#111;">1801</div></div>
<div style="position:absolute;left:355px;top:347px;width:5px;height:13px;overflow:hidden;"><div style="position:absolute;left:-101px;width:205px;text-align:center;top:0;font-size:11px;line-height:13px;white-space:pre;color:#111;">…</div></div>
<div style="position:absolute;left:361px;top:347px;width:37px;height:13px;overflow:hidden;"><div style="position:absolute;left:-101px;width:237px;text-align:center;top:0;font-size:11px;line-height:13px;white-space:pre;color:#111;">-</div></div>
<div style="position:absolute;left:399px;top:347px;width:29px;height:13px;overflow:hidden;"><div style="position:absolute;left:-101px;width:229px;text-align:center;top:0;font-size:11px;line-height:13px;white-space:pre;color:#111;">-</div></div>
<div style="position:absolute;left:429px;top:347px;width:37px;height:13px;overflow:hidden;"><div style="position:absolute;left:-101px;width:237px;text-align:center;top:0;font-size:11px;line-height:13px;white-space:pre;color:#111;">-</div></div>
<div style="position:absolute;left:467px;top:347px;width:37px;height:13px;overflow:hidden;"><div style="position:absolute;left:-101px;width:237px;text-align:center;top:0;font-size:11px;line-height:13px;white-space:pre;color:#111;">-</div></div>
<div style="position:absolute;left:505px;top:347px;width:37px;height:13px;overflow:hidden;"><div style="position:absolute;left:-101px;width:237px;text-align:center;top:0;font-size:11px;line-height:13px;white-space:pre;color:#111;">-</div></div>
<div style="position:absolute;left:543px;top:347px;width:37px;height:13px;overflow:hidden;"><div style="position:absolute;left:-101px;width:237px;text-align:center;top:0;font-size:11px;line-height:13px;white-space:pre;color:#111;">203</div></div>
<div style="position:absolute;left:581px;top:347px;width:37px;height:13px;overflow:hidden;"><div style="position:absolute;left:-101px;width:237px;text-align:center;top:0;font-size:11px;line-height:13px;white-space:pre;color:#111;">-</div></div>
<div style="position:absolute;left:619px;top:347px;width:37px;height:13px;overflow:hidden;"><div style="position:absolute;left:-101px;width:237px;text-align:center;top:0;font-size:11px;line-height:13px;white-space:pre;color:#111;">-</div></div>
<div style="position:absolute;left:657px;top:347px;width:37px;height:13px;overflow:hidden;"><div style="position:absolute;left:-101px;width:237px;text-align:center;top:0;font-size:11px;line-height:13px;white-space:pre;color:#111;">-</div></div>
<div style="position:absolute;left:695px;top:347px;width:37px;height:13px;overflow:hidden;"><div style="position:absolute;left:-101px;width:237px;text-align:center;top:0;font-size:11px;line-height:13px;white-space:pre;color:#111;">htt…</div></div>
<div style="position:absolute;left:141px;top:369px;width:32px;height:13px;overflow:hidden;"><div style="position:absolute;left:-101px;width:232px;text-align:center;top:0;font-size:11px;line-height:13px;white-space:pre;color:#111;">По…</div></div>
<div style="position:absolute;left:174px;top:369px;width:33px;height:13px;overflow:hidden;"><div style="position:absolute;left:-101px;width:233px;text-align:center;top:0;font-size:11px;line-height:13px;white-space:pre;color:#111;">До…</div></div>
<div style="position:absolute;left:208px;top:369px;width:32px;height:13px;overflow:hidden;"><div style="position:absolute;left:-101px;width:232px;text-align:center;top:0;font-size:11px;line-height:13px;white-space:pre;color:#111;">-</div></div>
<div style="position:absolute;left:241px;top:369px;width:8px;height:13px;overflow:hidden;"><div style="position:absolute;left:-101px;width:208px;text-align:center;top:0;font-size:11px;line-height:13px;white-space:pre;color:#111;">…</div></div>
<div style="position:absolute;left:250px;top:369px;width:34px;height:13px;overflow:hidden;"><div style="position:absolute;left:-101px;width:234px;text-align:center;top:0;font-size:11px;line-height:13px;white-space:pre;color:#111;">Ро…</div></div>
<div style="position:absolute;left:285px;top:369px;width:34px;height:13px;overflow:hidden;"><div style="position:absolute;left:-101px;width:234px;text-align:center;top:0;font-size:11px;line-height:13px;white-space:pre;color:#111;">-</div></div>
<div style="position:absolute;left:320px;top:369px;width:34px;height:13px;overflow:hidden;"><div style="position:absolute;left:-101px;width:234px;text-align:center;top:0;font-size:11px;line-height:13px;white-space:pre;color:#111;">3754</div></div>
<div style="position:absolute;left:355px;top:369px;width:5px;height:13px;overflow:hidden;"><div style="position:absolute;left:-101px;width:205px;text-align:center;top:0;font-size:11px;line-height:13px;white-space:pre;color:#111;">…</div></div>
<div style="position:absolute;left:361px;top:369px;width:37px;height:13px;overflow:hidden;"><div style="position:absolute;left:-101px;width:237px;text-align:center;top:0;font-size:11px;line-height:13px;white-space:pre;color:#111;">23</div></div>
<div style="position:absolute;left:399px;top:369px;width:29px;height:13px;overflow:hidden;"><div style="position:absolute;left:-101px;width:229px;text-align:center;top:0;font-size:11px;line-height:13px;white-space:pre;color:#111;">-</div></div>
<div style="position:absolute;left:429px;top:369px;width:37px;height:13px;overflow:hidden;"><div style="position:absolute;left:-101px;width:237px;text-align:center;top:0;font-size:11px;line-height:13px;white-space:pre;color:#111;">-</div></div>
<div style="position:absolute;left:467px;top:369px;width:37px;height:13px;overflow:hidden;"><div style="position:absolute;left:-101px;width:237px;text-align:center;top:0;font-size:11px;line-height:13px;white-space:pre;color:#111;">3</div></div>
<div style="position:absolute;left:505px;top:369px;width:37px;height:13px;overflow:hidden;"><div style="position:absolute;left:-101px;width:237px;text-align:center;top:0;font-size:11px;line-height:13px;white-space:pre;color:#111;">-</div></div>
<div style="position:absolute;left:543px;top:369px;width:37px;height:13px;overflow:hidden;"><div style="position:absolute;left:-101px;width:237px;text-align:center;top:0;font-size:11px;line-height:13px;white-space:pre;color:#111;">807</div></div>
<div style="position:absolute;left:581px;top:369px;width:37px;height:13px;overflow:hidden;"><div style="position:absolute;left:-101px;width:237px;text-align:center;top:0;font-size:11px;line-height:13px;white-space:pre;color:#111;">htt…</div></div>
<div style="position:absolute;left:619px;top:369px;width:37px;height:13px;overflow:hidden;"><div style="position:absolute;left:-101px;width:237px;text-align:center;top:0;font-size:11px;line-height:13px;white-space:pre;color:#111;">-</div></div>
<div style="position:absolute;left:657px;top:369px;width:37px;height:13px;overflow:hidden;"><div style="position:absolute;left:-101px;width:237px;text-align:center;top:0;font-size:11px;line-height:13px;white-space:pre;color:#111;">stu…</div></div>
<div style="position:absolute;left:695px;top:369px;width:37px;height:13px;overflow:hidden;"><div style="position:absolute;left:-101px;width:237px;text-align:center;top:0;font-size:11px;line-height:13px;white-space:pre;color:#111;">htt…</div></div>
<svg style="position:absolute;left:145px;top:391px;" width="10" height="11" viewBox="0 0 10 11"><g fill="#111"><path d="M0.5 2.5 H9.5 L8.6 4 V8.5 Q8.6 10.5 6.5 10.5 H3.5 Q1.2 10.5 1.2 8.5 V4 Z"/><rect x="2.3" y="0.3" width="1.1" height="2.5"/><rect x="4.5" y="0.3" width="1.1" height="2.5"/><rect x="6.6" y="0.3" width="1.1" height="2.5"/></g>
<path d="M2.5 5.2 Q4 3.8 5.2 5 Q6.3 5.8 7.8 4.6 M2.4 7.6 H7.8" stroke="#fff" stroke-width="0.9" fill="none"/></svg>
<div style="position:absolute;left:156px;top:391.05px;font-size:11px;line-height:12.65px;height:12.65px;white-space:pre;color:#111;">…</div>
<div style="position:absolute;left:174px;top:391px;width:33px;height:13px;overflow:hidden;"><div style="position:absolute;left:-101px;width:233px;text-align:center;top:0;font-size:11px;line-height:13px;white-space:pre;color:#111;">-</div></div>
<div style="position:absolute;left:208px;top:391px;width:32px;height:13px;overflow:hidden;"><div style="position:absolute;left:-101px;width:232px;text-align:center;top:0;font-size:11px;line-height:13px;white-space:pre;color:#111;">-</div></div>
<div style="position:absolute;left:241px;top:391px;width:8px;height:13px;overflow:hidden;"><div style="position:absolute;left:-101px;width:208px;text-align:center;top:0;font-size:11px;line-height:13px;white-space:pre;color:#111;">…</div></div>
<div style="position:absolute;left:250px;top:391px;width:34px;height:13px;overflow:hidden;"><div style="position:absolute;left:-101px;width:234px;text-align:center;top:0;font-size:11px;line-height:13px;white-space:pre;color:#111;">Ро…</div></div>
<div style="position:absolute;left:285px;top:391px;width:34px;height:13px;overflow:hidden;"><div style="position:absolute;left:-101px;width:234px;text-align:center;top:0;font-size:11px;line-height:13px;white-space:pre;color:#111;">Мо…</div></div>
<div style="position:absolute;left:320px;top:391px;width:34px;height:13px;overflow:hidden;"><div style="position:absolute;left:-101px;width:234px;text-align:center;top:0;font-size:11px;line-height:13px;white-space:pre;color:#111;">2021</div></div>
<div style="position:absolute;left:355px;top:391px;width:5px;height:13px;overflow:hidden;"><div style="position:absolute;left:-101px;width:205px;text-align:center;top:0;font-size:11px;line-height:13px;white-space:pre;color:#111;">…</div></div>
<div style="position:absolute;left:361px;top:391px;width:37px;height:13px;overflow:hidden;"><div style="position:absolute;left:-101px;width:237px;text-align:center;top:0;font-size:11px;line-height:13px;white-space:pre;color:#111;">4410</div></div>
<div style="position:absolute;left:399px;top:391px;width:29px;height:13px;overflow:hidden;"><div style="position:absolute;left:-101px;width:229px;text-align:center;top:0;font-size:11px;line-height:13px;white-space:pre;color:#111;">2</div></div>
<div style="position:absolute;left:429px;top:391px;width:37px;height:13px;overflow:hidden;"><div style="position:absolute;left:-101px;width:237px;text-align:center;top:0;font-size:11px;line-height:13px;white-space:pre;color:#111;">7</div></div>
<div style="position:absolute;left:467px;top:391px;width:37px;height:13px;overflow:hidden;"><div style="position:absolute;left:-101px;width:237px;text-align:center;top:0;font-size:11px;line-height:13px;white-space:pre;color:#111;">8</div></div>
<div style="position:absolute;left:505px;top:391px;width:37px;height:13px;overflow:hidden;"><div style="position:absolute;left:-101px;width:237px;text-align:center;top:0;font-size:11px;line-height:13px;white-space:pre;color:#111;">2</div></div>
<div style="position:absolute;left:543px;top:391px;width:37px;height:13px;overflow:hidden;"><div style="position:absolute;left:-101px;width:237px;text-align:center;top:0;font-size:11px;line-height:13px;white-space:pre;color:#111;">213</div></div>
<div style="position:absolute;left:581px;top:391px;width:37px;height:13px;overflow:hidden;"><div style="position:absolute;left:-101px;width:237px;text-align:center;top:0;font-size:11px;line-height:13px;white-space:pre;color:#111;">htt…</div></div>
<div style="position:absolute;left:619px;top:391px;width:37px;height:13px;overflow:hidden;"><div style="position:absolute;left:-101px;width:237px;text-align:center;top:0;font-size:11px;line-height:13px;white-space:pre;color:#111;">-</div></div>
<div style="position:absolute;left:657px;top:391px;width:37px;height:13px;overflow:hidden;"><div style="position:absolute;left:-101px;width:237px;text-align:center;top:0;font-size:11px;line-height:13px;white-space:pre;color:#111;">-</div></div>
<div style="position:absolute;left:695px;top:391px;width:37px;height:13px;overflow:hidden;"><div style="position:absolute;left:-101px;width:237px;text-align:center;top:0;font-size:11px;line-height:13px;white-space:pre;color:#111;">htt…</div></div>
<div style="position:absolute;left:141px;top:413px;width:32px;height:13px;overflow:hidden;"><div style="position:absolute;left:-101px;width:232px;text-align:center;top:0;font-size:11px;line-height:13px;white-space:pre;color:#111;">Ку…</div></div>
<div style="position:absolute;left:174px;top:413px;width:33px;height:13px;overflow:hidden;"><div style="position:absolute;left:-101px;width:233px;text-align:center;top:0;font-size:11px;line-height:13px;white-space:pre;color:#111;">Ку…</div></div>
<div style="position:absolute;left:208px;top:413px;width:32px;height:13px;overflow:hidden;"><div style="position:absolute;left:-101px;width:232px;text-align:center;top:0;font-size:11px;line-height:13px;white-space:pre;color:#111;">Вр…</div></div>
<div style="position:absolute;left:241px;top:413px;width:8px;height:13px;overflow:hidden;"><div style="position:absolute;left:-101px;width:208px;text-align:center;top:0;font-size:11px;line-height:13px;white-space:pre;color:#111;">…</div></div>
<div style="position:absolute;left:250px;top:413px;width:34px;height:13px;overflow:hidden;"><div style="position:absolute;left:-101px;width:234px;text-align:center;top:0;font-size:11px;line-height:13px;white-space:pre;color:#111;">Ро…</div></div>
<div style="position:absolute;left:285px;top:413px;width:34px;height:13px;overflow:hidden;"><div style="position:absolute;left:-101px;width:234px;text-align:center;top:0;font-size:11px;line-height:13px;white-space:pre;color:#111;">Са…</div></div>
<div style="position:absolute;left:320px;top:413px;width:34px;height:13px;overflow:hidden;"><div style="position:absolute;left:-101px;width:234px;text-align:center;top:0;font-size:11px;line-height:13px;white-space:pre;color:#111;">2814</div></div>
<div style="position:absolute;left:355px;top:413px;width:5px;height:13px;overflow:hidden;"><div style="position:absolute;left:-101px;width:205px;text-align:center;top:0;font-size:11px;line-height:13px;white-space:pre;color:#111;">…</div></div>
<div style="position:absolute;left:361px;top:413px;width:37px;height:13px;overflow:hidden;"><div style="position:absolute;left:-101px;width:237px;text-align:center;top:0;font-size:11px;line-height:13px;white-space:pre;color:#111;">2</div></div>
<div style="position:absolute;left:399px;top:413px;width:29px;height:13px;overflow:hidden;"><div style="position:absolute;left:-101px;width:229px;text-align:center;top:0;font-size:11px;line-height:13px;white-space:pre;color:#111;">1</div></div>
<div style="position:absolute;left:429px;top:413px;width:37px;height:13px;overflow:hidden;"><div style="position:absolute;left:-101px;width:237px;text-align:center;top:0;font-size:11px;line-height:13px;white-space:pre;color:#111;">-</div></div>
<div style="position:absolute;left:467px;top:413px;width:37px;height:13px;overflow:hidden;"><div style="position:absolute;left:-101px;width:237px;text-align:center;top:0;font-size:11px;line-height:13px;white-space:pre;color:#111;">-</div></div>
<div style="position:absolute;left:505px;top:413px;width:37px;height:13px;overflow:hidden;"><div style="position:absolute;left:-101px;width:237px;text-align:center;top:0;font-size:11px;line-height:13px;white-space:pre;color:#111;">3</div></div>
<div style="position:absolute;left:543px;top:413px;width:37px;height:13px;overflow:hidden;"><div style="position:absolute;left:-101px;width:237px;text-align:center;top:0;font-size:11px;line-height:13px;white-space:pre;color:#111;">-</div></div>
<div style="position:absolute;left:581px;top:413px;width:37px;height:13px;overflow:hidden;"><div style="position:absolute;left:-101px;width:237px;text-align:center;top:0;font-size:11px;line-height:13px;white-space:pre;color:#111;">htt…</div></div>
<div style="position:absolute;left:619px;top:413px;width:37px;height:13px;overflow:hidden;"><div style="position:absolute;left:-101px;width:237px;text-align:center;top:0;font-size:11px;line-height:13px;white-space:pre;color:#111;">-</div></div>
<div style="position:absolute;left:657px;top:413px;width:37px;height:13px;overflow:hidden;"><div style="position:absolute;left:-101px;width:237px;text-align:center;top:0;font-size:11px;line-height:13px;white-space:pre;color:#111;">-</div></div>
<div style="position:absolute;left:695px;top:413px;width:37px;height:13px;overflow:hidden;"><div style="position:absolute;left:-101px;width:237px;text-align:center;top:0;font-size:11px;line-height:13px;white-space:pre;color:#111;">htt…</div></div>
<div style="position:absolute;left:141px;top:435px;width:32px;height:13px;overflow:hidden;"><div style="position:absolute;left:-101px;width:232px;text-align:center;top:0;font-size:11px;line-height:13px;white-space:pre;color:#111;">ПЕ…</div></div>
<div style="position:absolute;left:174px;top:435px;width:33px;height:13px;overflow:hidden;"><div style="position:absolute;left:-101px;width:233px;text-align:center;top:0;font-size:11px;line-height:13px;white-space:pre;color:#111;">В …</div></div>
<div style="position:absolute;left:208px;top:435px;width:32px;height:13px;overflow:hidden;"><div style="position:absolute;left:-101px;width:232px;text-align:center;top:0;font-size:11px;line-height:13px;white-space:pre;color:#111;">8-…</div></div>
<div style="position:absolute;left:241px;top:435px;width:8px;height:13px;overflow:hidden;"><div style="position:absolute;left:-101px;width:208px;text-align:center;top:0;font-size:11px;line-height:13px;white-space:pre;color:#111;">…</div></div>
<div style="position:absolute;left:250px;top:435px;width:34px;height:13px;overflow:hidden;"><div style="position:absolute;left:-101px;width:234px;text-align:center;top:0;font-size:11px;line-height:13px;white-space:pre;color:#111;">Ро…</div></div>
<div style="position:absolute;left:285px;top:435px;width:34px;height:13px;overflow:hidden;"><div style="position:absolute;left:-101px;width:234px;text-align:center;top:0;font-size:11px;line-height:13px;white-space:pre;color:#111;">Мо…</div></div>
<div style="position:absolute;left:320px;top:435px;width:34px;height:13px;overflow:hidden;"><div style="position:absolute;left:-101px;width:234px;text-align:center;top:0;font-size:11px;line-height:13px;white-space:pre;color:#111;">3007</div></div>
<div style="position:absolute;left:355px;top:435px;width:5px;height:13px;overflow:hidden;"><div style="position:absolute;left:-101px;width:205px;text-align:center;top:0;font-size:11px;line-height:13px;white-space:pre;color:#111;">…</div></div>
<div style="position:absolute;left:361px;top:435px;width:37px;height:13px;overflow:hidden;"><div style="position:absolute;left:-101px;width:237px;text-align:center;top:0;font-size:11px;line-height:13px;white-space:pre;color:#111;">5</div></div>
<div style="position:absolute;left:399px;top:435px;width:29px;height:13px;overflow:hidden;"><div style="position:absolute;left:-101px;width:229px;text-align:center;top:0;font-size:11px;line-height:13px;white-space:pre;color:#111;">-</div></div>
<div style="position:absolute;left:429px;top:435px;width:37px;height:13px;overflow:hidden;"><div style="position:absolute;left:-101px;width:237px;text-align:center;top:0;font-size:11px;line-height:13px;white-space:pre;color:#111;">-</div></div>
<div style="position:absolute;left:467px;top:435px;width:37px;height:13px;overflow:hidden;"><div style="position:absolute;left:-101px;width:237px;text-align:center;top:0;font-size:11px;line-height:13px;white-space:pre;color:#111;">-</div></div>
<div style="position:absolute;left:505px;top:435px;width:37px;height:13px;overflow:hidden;"><div style="position:absolute;left:-101px;width:237px;text-align:center;top:0;font-size:11px;line-height:13px;white-space:pre;color:#111;">1</div></div>
<div style="position:absolute;left:543px;top:435px;width:37px;height:13px;overflow:hidden;"><div style="position:absolute;left:-101px;width:237px;text-align:center;top:0;font-size:11px;line-height:13px;white-space:pre;color:#111;">26</div></div>
<div style="position:absolute;left:581px;top:435px;width:37px;height:13px;overflow:hidden;"><div style="position:absolute;left:-101px;width:237px;text-align:center;top:0;font-size:11px;line-height:13px;white-space:pre;color:#111;">8-9…</div></div>
<div style="position:absolute;left:619px;top:435px;width:37px;height:13px;overflow:hidden;"><div style="position:absolute;left:-101px;width:237px;text-align:center;top:0;font-size:11px;line-height:13px;white-space:pre;color:#111;">8-9…</div></div>
<div style="position:absolute;left:657px;top:435px;width:37px;height:13px;overflow:hidden;"><div style="position:absolute;left:-101px;width:237px;text-align:center;top:0;font-size:11px;line-height:13px;white-space:pre;color:#111;">-</div></div>
<div style="position:absolute;left:695px;top:435px;width:37px;height:13px;overflow:hidden;"><div style="position:absolute;left:-101px;width:237px;text-align:center;top:0;font-size:11px;line-height:13px;white-space:pre;color:#111;">htt…</div></div>
<div style="position:absolute;left:141px;top:457px;width:32px;height:13px;overflow:hidden;"><div style="position:absolute;left:-101px;width:232px;text-align:center;top:0;font-size:11px;line-height:13px;white-space:pre;color:#111;">ку…</div></div>
<div style="position:absolute;left:174px;top:457px;width:33px;height:13px;overflow:hidden;"><div style="position:absolute;left:-101px;width:233px;text-align:center;top:0;font-size:11px;line-height:13px;white-space:pre;color:#111;">-</div></div>
<div style="position:absolute;left:208px;top:457px;width:32px;height:13px;overflow:hidden;"><div style="position:absolute;left:-101px;width:232px;text-align:center;top:0;font-size:11px;line-height:13px;white-space:pre;color:#111;">-</div></div>
<div style="position:absolute;left:241px;top:457px;width:8px;height:13px;overflow:hidden;"><div style="position:absolute;left:-101px;width:208px;text-align:center;top:0;font-size:11px;line-height:13px;white-space:pre;color:#111;">…</div></div>
<div style="position:absolute;left:250px;top:457px;width:34px;height:13px;overflow:hidden;"><div style="position:absolute;left:-101px;width:234px;text-align:center;top:0;font-size:11px;line-height:13px;white-space:pre;color:#111;">-</div></div>
<div style="position:absolute;left:285px;top:457px;width:34px;height:13px;overflow:hidden;"><div style="position:absolute;left:-101px;width:234px;text-align:center;top:0;font-size:11px;line-height:13px;white-space:pre;color:#111;">-</div></div>
<div style="position:absolute;left:320px;top:457px;width:34px;height:13px;overflow:hidden;"><div style="position:absolute;left:-101px;width:234px;text-align:center;top:0;font-size:11px;line-height:13px;white-space:pre;color:#111;">1645</div></div>
<div style="position:absolute;left:355px;top:457px;width:5px;height:13px;overflow:hidden;"><div style="position:absolute;left:-101px;width:205px;text-align:center;top:0;font-size:11px;line-height:13px;white-space:pre;color:#111;">…</div></div>
<div style="position:absolute;left:361px;top:457px;width:37px;height:13px;overflow:hidden;"><div style="position:absolute;left:-101px;width:237px;text-align:center;top:0;font-size:11px;line-height:13px;white-space:pre;color:#111;">-</div></div>
<div style="position:absolute;left:399px;top:457px;width:29px;height:13px;overflow:hidden;"><div style="position:absolute;left:-101px;width:229px;text-align:center;top:0;font-size:11px;line-height:13px;white-space:pre;color:#111;">-</div></div>
<div style="position:absolute;left:429px;top:457px;width:37px;height:13px;overflow:hidden;"><div style="position:absolute;left:-101px;width:237px;text-align:center;top:0;font-size:11px;line-height:13px;white-space:pre;color:#111;">-</div></div>
<div style="position:absolute;left:467px;top:457px;width:37px;height:13px;overflow:hidden;"><div style="position:absolute;left:-101px;width:237px;text-align:center;top:0;font-size:11px;line-height:13px;white-space:pre;color:#111;">-</div></div>
<div style="position:absolute;left:505px;top:457px;width:37px;height:13px;overflow:hidden;"><div style="position:absolute;left:-101px;width:237px;text-align:center;top:0;font-size:11px;line-height:13px;white-space:pre;color:#111;">-</div></div>
<div style="position:absolute;left:543px;top:457px;width:37px;height:13px;overflow:hidden;"><div style="position:absolute;left:-101px;width:237px;text-align:center;top:0;font-size:11px;line-height:13px;white-space:pre;color:#111;"></div></div>
<div style="position:absolute;left:581px;top:457px;width:37px;height:13px;overflow:hidden;"><div style="position:absolute;left:-101px;width:237px;text-align:center;top:0;font-size:11px;line-height:13px;white-space:pre;color:#111;">-</div></div>
<div style="position:absolute;left:619px;top:457px;width:37px;height:13px;overflow:hidden;"><div style="position:absolute;left:-101px;width:237px;text-align:center;top:0;font-size:11px;line-height:13px;white-space:pre;color:#111;">-</div></div>
<div style="position:absolute;left:657px;top:457px;width:37px;height:13px;overflow:hidden;"><div style="position:absolute;left:-101px;width:237px;text-align:center;top:0;font-size:11px;line-height:13px;white-space:pre;color:#111;">-</div></div>
<div style="position:absolute;left:695px;top:457px;width:37px;height:13px;overflow:hidden;"><div style="position:absolute;left:-101px;width:237px;text-align:center;top:0;font-size:11px;line-height:13px;white-space:pre;color:#111;">-</div></div>
<div style="position:absolute;left:141px;top:479px;width:32px;height:13px;overflow:hidden;"><div style="position:absolute;left:-101px;width:232px;text-align:center;top:0;font-size:11px;line-height:13px;white-space:pre;color:#111;">К…</div></div>
<div style="position:absolute;left:174px;top:479px;width:33px;height:13px;overflow:hidden;"><div style="position:absolute;left:-101px;width:233px;text-align:center;top:0;font-size:11px;line-height:13px;white-space:pre;color:#111;">ст…</div></div>
<div style="position:absolute;left:208px;top:479px;width:32px;height:13px;overflow:hidden;"><div style="position:absolute;left:-101px;width:232px;text-align:center;top:0;font-size:11px;line-height:13px;white-space:pre;color:#111;">пр…</div></div>
<div style="position:absolute;left:241px;top:479px;width:8px;height:13px;overflow:hidden;"><div style="position:absolute;left:-101px;width:208px;text-align:center;top:0;font-size:11px;line-height:13px;white-space:pre;color:#111;">…</div></div>
<div style="position:absolute;left:250px;top:479px;width:34px;height:13px;overflow:hidden;"><div style="position:absolute;left:-101px;width:234px;text-align:center;top:0;font-size:11px;line-height:13px;white-space:pre;color:#111;">-</div></div>
<div style="position:absolute;left:285px;top:479px;width:34px;height:13px;overflow:hidden;"><div style="position:absolute;left:-101px;width:234px;text-align:center;top:0;font-size:11px;line-height:13px;white-space:pre;color:#111;">-</div></div>
<div style="position:absolute;left:320px;top:479px;width:34px;height:13px;overflow:hidden;"><div style="position:absolute;left:-101px;width:234px;text-align:center;top:0;font-size:11px;line-height:13px;white-space:pre;color:#111;">1686</div></div>
<div style="position:absolute;left:355px;top:479px;width:5px;height:13px;overflow:hidden;"><div style="position:absolute;left:-101px;width:205px;text-align:center;top:0;font-size:11px;line-height:13px;white-space:pre;color:#111;">…</div></div>
<div style="position:absolute;left:361px;top:479px;width:37px;height:13px;overflow:hidden;"><div style="position:absolute;left:-101px;width:237px;text-align:center;top:0;font-size:11px;line-height:13px;white-space:pre;color:#111;">249</div></div>
<div style="position:absolute;left:399px;top:479px;width:29px;height:13px;overflow:hidden;"><div style="position:absolute;left:-101px;width:229px;text-align:center;top:0;font-size:11px;line-height:13px;white-space:pre;color:#111;">100</div></div>
<div style="position:absolute;left:429px;top:479px;width:37px;height:13px;overflow:hidden;"><div style="position:absolute;left:-101px;width:237px;text-align:center;top:0;font-size:11px;line-height:13px;white-space:pre;color:#111;">-</div></div>
<div style="position:absolute;left:467px;top:479px;width:37px;height:13px;overflow:hidden;"><div style="position:absolute;left:-101px;width:237px;text-align:center;top:0;font-size:11px;line-height:13px;white-space:pre;color:#111;">-</div></div>
<div style="position:absolute;left:505px;top:479px;width:37px;height:13px;overflow:hidden;"><div style="position:absolute;left:-101px;width:237px;text-align:center;top:0;font-size:11px;line-height:13px;white-space:pre;color:#111;">8</div></div>
<div style="position:absolute;left:543px;top:479px;width:37px;height:13px;overflow:hidden;"><div style="position:absolute;left:-101px;width:237px;text-align:center;top:0;font-size:11px;line-height:13px;white-space:pre;color:#111;">296</div></div>
<div style="position:absolute;left:581px;top:479px;width:37px;height:13px;overflow:hidden;"><div style="position:absolute;left:-101px;width:237px;text-align:center;top:0;font-size:11px;line-height:13px;white-space:pre;color:#111;">htt…</div></div>
<div style="position:absolute;left:619px;top:479px;width:37px;height:13px;overflow:hidden;"><div style="position:absolute;left:-101px;width:237px;text-align:center;top:0;font-size:11px;line-height:13px;white-space:pre;color:#111;">8 (…</div></div>
<div style="position:absolute;left:657px;top:479px;width:37px;height:13px;overflow:hidden;"><div style="position:absolute;left:-101px;width:237px;text-align:center;top:0;font-size:11px;line-height:13px;white-space:pre;color:#111;">kua…</div></div>
<div style="position:absolute;left:695px;top:479px;width:37px;height:13px;overflow:hidden;"><div style="position:absolute;left:-101px;width:237px;text-align:center;top:0;font-size:11px;line-height:13px;white-space:pre;color:#111;">htt…</div></div>
<svg style="position:absolute;left:120px;top:305px;" width="8" height="11" viewBox="0 0 8 11"><path d="M1 1 L7 5.5 L1 10Z" fill="#222"/></svg>
<svg style="position:absolute;left:122px;top:504px;" width="8" height="8" viewBox="0 0 8 8"><path d="M4 0.5 L4.9 2.9 L7.5 3 L5.4 4.6 L6.2 7.2 L4 5.7 L1.8 7.2 L2.6 4.6 L0.5 3 L3.1 2.9Z" fill="#333"/></svg>
<div style="position:absolute;left:8px;top:586px;width:744px;height:28px;background:#4682b4;"></div>
<div style="position:absolute;left:19.5px;top:593.33px;font-size:14px;line-height:16.10px;height:16.10px;white-space:pre;color:#fff;transform:scaleX(1.02);transform-origin:0 0;">Получено капч :</div>
<div style="position:absolute;left:152px;top:593.33px;font-size:14px;line-height:16.10px;height:16.10px;white-space:pre;color:#fff;">0</div>
<svg style="position:absolute;left:409px;top:591px;" width="19" height="18" viewBox="0 0 19 18"><ellipse cx="9" cy="8.4" rx="7.8" ry="7.4" fill="#fff"/><path d="M4.2 12.5 L3.8 17 L8.6 14.5Z" fill="#fff"/><g fill="#555d66"><rect x="4.2" y="7.5" width="1.8" height="1.8"/><rect x="8.2" y="7.5" width="1.8" height="1.8"/><rect x="12.2" y="7.5" width="1.8" height="1.8"/></g></svg>
<div style="position:absolute;left:431px;top:593.33px;font-size:14px;line-height:16.10px;height:16.10px;white-space:pre;color:#fff;transform:scaleX(0.96);transform-origin:0 0;">Макросы</div>
<svg style="position:absolute;left:511px;top:592px;" width="18" height="17" viewBox="0 0 18 17"><g fill="#fff"><rect x="1" y="0" width="16" height="3.3" rx="1.4"/><rect x="1" y="6.3" width="16" height="3.3" rx="1.4"/><rect x="1" y="12.6" width="16" height="3.3" rx="1.4"/></g></svg>
<div style="position:absolute;left:534px;top:593.33px;font-size:14px;line-height:16.10px;height:16.10px;white-space:pre;color:#fff;transform:scaleX(1.0);transform-origin:0 0;">Отчет обновления</div>
<div style="position:absolute;left:679px;top:593.33px;font-size:14px;line-height:16.10px;height:16.10px;white-space:pre;color:#fff;transform:scaleX(1.0);transform-origin:0 0;">Ver : 2.1a</div>
</div></body></html>
